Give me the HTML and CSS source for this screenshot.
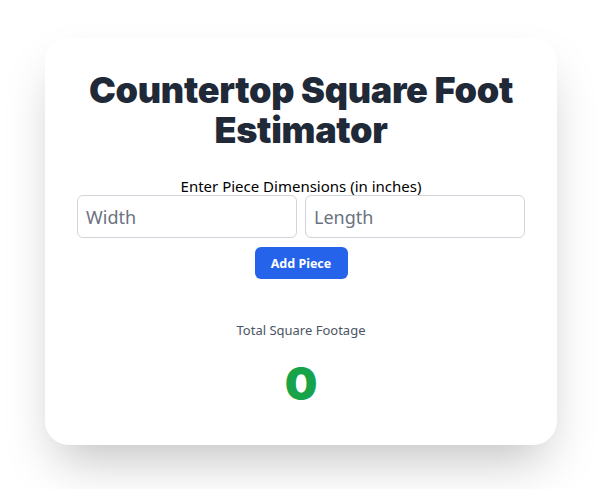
FILE: index.html
```html
<!DOCTYPE html>
<html lang="en">
<head>
    <meta charset="UTF-8">
    <meta name="viewport" content="width=device-width, initial-scale=1.0">
    <title>Countertop Square Foot Estimator</title>
    <link rel="stylesheet" href="styles.css">
</head>
<body>
<div class="card">
    <h1>Countertop Square Foot Estimator</h1>

    <form id="pieceForm" onsubmit="addPiece(event)">
        <label class="form-label">Enter Piece Dimensions (in inches)</label>
        <div class="inputs">
            <input type="number" id="width" placeholder="Width">
            <input type="number" id="length" placeholder="Length">
        </div>
        <button type="submit" class="btn-add">Add Piece</button>
    </form>

    <div class="total">
        <p class="total-label">Total Square Footage</p>
        <p class="total-value" id="total">0</p>
    </div>
</div>

<script>
    let total = 0;

    function addPiece(event) {
        event.preventDefault();
        const w = parseFloat(document.getElementById('width').value);
        const l = parseFloat(document.getElementById('length').value);
        if (!w || !l) return;
        total += (w * l) / 144;
        document.getElementById('total').textContent = Math.round(total * 100) / 100;
        document.getElementById('pieceForm').reset();
    }
</script>
</body>
</html>
```

FILE: styles.css
```css
body {
    font-family: 'Noto Sans', 'Open Sans', sans-serif;
    background-color: #fff;
    color: #000;
    margin: 0;
    min-height: 100vh;
    display: flex;
    justify-content: center;
    align-items: flex-start;
    padding: 38px 1px 0 0;
    box-sizing: border-box;
}

.card {
    width: 512px;
    box-sizing: border-box;
    background-color: #fff;
    padding: 32px 32px 38px;
    border-radius: 24px;
    box-shadow: 0 25px 50px -12px rgba(0, 0, 0, 0.25);
    text-align: center;
}

h1 {
    font-family: 'Inter', sans-serif;
    font-weight: 900;
    font-size: 36px;
    line-height: 40px;
    letter-spacing: -0.3px;
    color: #1f2937;
    margin: 0 0 26px;
}

form {
    display: flex;
    flex-direction: column;
    align-items: center;
}

.form-label {
    display: block;
    font-size: 15px;
    line-height: 20px;
    margin-bottom: 0;
}

.inputs {
    display: flex;
    gap: 8px;
    width: 100%;
    margin-top: -1px;
}

.inputs input {
    flex: 1;
    min-width: 0;
    height: 43px;
    box-sizing: border-box;
    padding: 0 8px;
    border: 1px solid #d1d5db;
    border-radius: 6px;
    font-family: inherit;
    font-size: 18px;
    color: #111827;
}

.inputs input::placeholder {
    color: #6b7280;
}

.btn-add {
    margin-top: 9px;
    width: 93px;
    height: 32px;
    background-color: #2563eb;
    color: #fff;
    border: none;
    border-radius: 6px;
    font-family: inherit;
    font-weight: 700;
    font-size: 12.5px;
    cursor: pointer;
}

.btn-add:hover {
    background-color: #1d4ed8;
}

.total {
    margin-top: 41px;
}

.total-label {
    margin: 0;
    font-size: 13px;
    line-height: 20px;
    color: #4b5563;
}

.total-value {
    margin: 19px 0 0;
    font-family: 'Inter', sans-serif;
    font-weight: 900;
    font-size: 46px;
    line-height: 48px;
    color: #16a34a;
}
```
